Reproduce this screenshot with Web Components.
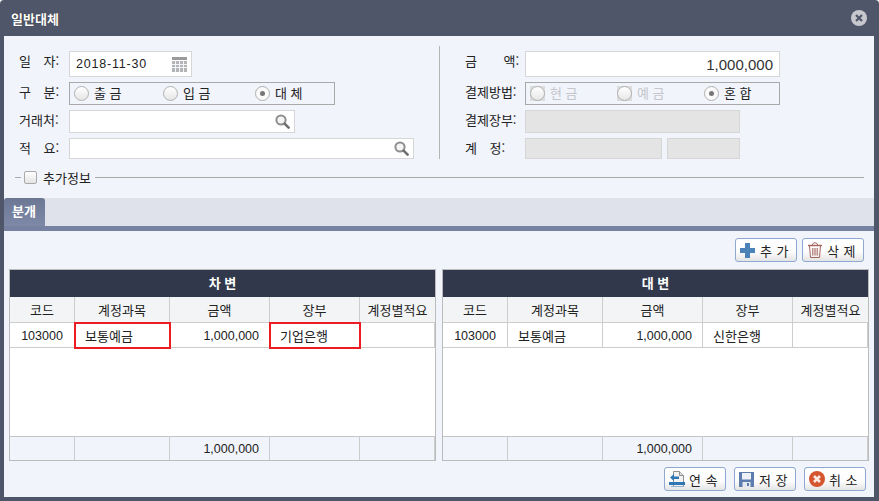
<!DOCTYPE html>
<html lang="ko">
<head>
<meta charset="UTF-8">
<title>일반대체</title>
<style>
  html, body { margin: 0; height: 100%; background: #fff; }
  body { font: 13px "Noto Sans CJK KR", "Liberation Sans", sans-serif; color: #222; overflow: hidden; }
</style>
</head>
<body>

<transfer-dialog heading="일반대체">
  <form-panel slot="form">
    <form-column slot="left" label-width="50">
      <form-field label="일 자:" gap="9"><text-box width="123" value="2018-11-30" icon="calendar"></text-box></form-field>
      <form-field label="구 분:" gap="9">
        <radio-group columns="89px 92px 1fr" width="266">
          <radio-dot>출 금</radio-dot>
          <radio-dot>입 금</radio-dot>
          <radio-dot checked>대 체</radio-dot>
        </radio-group>
      </form-field>
      <form-field label="거래처:"><text-box width="226" icon="search"></text-box></form-field>
      <form-field label="적 요:" gap="9"><text-box width="345" icon="search"></text-box></form-field>
    </form-column>
    <form-column slot="right" label-width="60">
      <form-field label="금 액:" gap="23"><text-box width="255" value="1,000,000" amount></text-box></form-field>
      <form-field label="결제방법:">
        <radio-group columns="87px 87px 1fr" width="255">
          <radio-dot disabled>현 금</radio-dot>
          <radio-dot disabled>예 금</radio-dot>
          <radio-dot checked>혼 합</radio-dot>
        </radio-group>
      </form-field>
      <form-field label="결제장부:"><text-box width="215" disabled></text-box></form-field>
      <form-field label="계 정:" gap="9">
        <text-box width="137" disabled></text-box><text-box width="73" disabled></text-box>
      </form-field>
    </form-column>
  </form-panel>

  <fold-legend slot="form">추가정보</fold-legend>
  <tab-strip slot="tabs">분개</tab-strip>

  <tool-button slot="tools" icon="plus">추 가</tool-button>
  <tool-button slot="tools" icon="trash">삭 제</tool-button>

  <ledger-table slot="tables" heading="차 변" account="보통예금" book="기업은행" flagged></ledger-table>
  <ledger-table slot="tables" heading="대 변" account="보통예금" book="신한은행"></ledger-table>

  <tool-button slot="actions" icon="next">연 속</tool-button>
  <tool-button slot="actions" icon="disk">저 장</tool-button>
  <tool-button slot="actions" icon="cancel">취 소</tool-button>
</transfer-dialog>

<script>
const ICONS = {
  calendar: `<svg width="15" height="15" viewBox="0 0 15 15"><rect width="15" height="3" fill="#9a9a9a"/><rect y="4" width="15" height="11" fill="#b4b4b4"/><path d="M0 7.500h15M0 10.500h15M3.500 3v12M7.500 3v12M11.500 3v12" stroke="#f1f4fa" stroke-width="1"/></svg>`,
  search: `<svg width="15" height="15" viewBox="0 0 15 15" fill="none"><circle cx="6" cy="6" r="4.600" stroke="#8f8f8f" stroke-width="2" fill="#f4f6f4"/><path d="M9.600 9.600l4 4" stroke="#6e6e6e" stroke-width="2.600" stroke-linecap="round"/></svg>`,
  plus: `<svg width="15" height="15" viewBox="0 0 15 15"><path d="M5 0h5v5h5v5h-5v5H5v-5H0V5h5z" fill="#4b82b8"/></svg>`,
  trash: `<svg width="14" height="16" viewBox="0 0 14 16" fill="none" stroke="#a4645c"><path d="M0 3.500h14" stroke-width="1.400"/><path d="M4.500 3c0-3 5-3 5 0"/><path d="M1.500 4l1 11.500h9l1-11.500"/><path d="M4.800 6v7.500M7 6v7.500M9.200 6v7.500" stroke-width="1.100"/></svg>`,
  next: `<svg width="16" height="17" viewBox="0 0 16 17"><path d="M4.500 .5h6l4 4v11h-10z" fill="#f2f2f2" stroke="#8f8f8f"/><path d="M10.500 .5v4h4" fill="#dcdcdc" stroke="#8f8f8f"/><path d="M1 6.500l4-3.500v2.500h5v2.500H5v2z" fill="#2f76b4"/><path d="M0 11h16v3H0z" fill="#2f76b4"/><path d="M2 15h12v1H2z" fill="#8fb4d6"/></svg>`,
  disk: `<svg width="15" height="15" viewBox="0 0 15 15"><path d="M0 0h15v15H0z" fill="#5d7daf"/><rect x="3" y="1" width="9" height="6.500" fill="#eef2f8"/><rect x="3.500" y="10" width="8" height="5" fill="#e4e8f0"/><rect x="8" y="11" width="2" height="3" fill="#5d7daf"/></svg>`,
  cancel: `<svg width="16" height="16" viewBox="0 0 16 16"><circle cx="8" cy="8" r="8" fill="#d4552f"/><path d="M5 5l6 6M11 5l-6 6" stroke="#fbe9e2" stroke-width="2.600"/></svg>`,
};

class TransferDialog extends HTMLElement {
  constructor() {
    super();
    this.attachShadow({ mode: "open" }).innerHTML = `
      <style>
        :host { display: flex; flex-direction: column; width: 879px; height: 501px; box-sizing: border-box;
                background: #50566a; border-radius: 4px 4px 0 0; padding: 0 5px 4px 4px; }
        header { height: 36px; flex: none; display: flex; align-items: center; justify-content: space-between;
                 padding: 0 7px 0 7px; color: #fff; font-weight: 700; font-size: 13px; text-shadow: 0 0 1px #222; }
        main { flex: 1; display: flex; flex-direction: column; background: #f1f4fa; }
        .top { height: 162px; flex: none; box-sizing: border-box; padding-top: 10px; }
        .tools { display: flex; justify-content: flex-end; gap: 5px; padding: 7px 10px 7px 0; }
        .tables { display: flex; gap: 6px; padding: 0 5px; }
        .actions { display: flex; justify-content: flex-end; gap: 8px; padding: 6px 8px 6px 0; }
        .close { width: 16px; height: 16px; display: block; }
      </style>
      <header>
        <span id="title"></span>
        <svg class="close" viewBox="0 0 16 16"><circle cx="8" cy="8" r="8" fill="#c6c8ce"/><path d="M5 5l6 6M11 5l-6 6" stroke="#50566a" stroke-width="2.200"/></svg>
      </header>
      <main>
        <div class="top"><slot name="form"></slot></div>
        <slot name="tabs"></slot>
        <div class="tools"><slot name="tools"></slot></div>
        <div class="tables"><slot name="tables"></slot></div>
        <div class="actions"><slot name="actions"></slot></div>
      </main>`;
    this.shadowRoot.getElementById("title").textContent = this.getAttribute("heading");
  }
}

class FormPanel extends HTMLElement {
  constructor() {
    super();
    this.attachShadow({ mode: "open" }).innerHTML = `
      <style>
        :host { display: flex; height: 113px; }
        .l { width: 435px; box-sizing: border-box; padding: 5px 0 0 15px; }
        .r { flex: 1; box-sizing: border-box; padding: 5px 0 0 25px; border-left: 1px solid #b4b4b4; }
      </style>
      <div class="l"><slot name="left"></slot></div>
      <div class="r"><slot name="right"></slot></div>`;
  }
}

class FormColumn extends HTMLElement {
  constructor() {
    super();
    this.attachShadow({ mode: "open" }).innerHTML = `
      <style>
        :host { display: grid; grid-template-rows: 26px 23px 23px 21px; row-gap: 5px;
                --label-width: ${this.getAttribute("label-width")}px; }
      </style>
      <slot></slot>`;
  }
}

class FormField extends HTMLElement {
  constructor() {
    super();
    this.attachShadow({ mode: "open" }).innerHTML = `
      <style>
        :host { display: flex; align-items: flex-start; }
        label { width: var(--label-width); flex: none; line-height: 19px; white-space: pre; color: #222; }
        .c { display: flex; gap: 5px; height: 100%; }
      </style>
      <label></label><div class="c"><slot></slot></div>`;
    const label = this.shadowRoot.querySelector("label");
    label.textContent = this.getAttribute("label");
    label.style.wordSpacing = (this.getAttribute("gap") || 0) + "px";
  }
}

class TextBox extends HTMLElement {
  constructor() {
    super();
    const icon = this.getAttribute("icon");
    this.attachShadow({ mode: "open" }).innerHTML = `
      <style>
        :host { display: flex; align-items: center; box-sizing: border-box; height: 100%;
                width: ${this.getAttribute("width")}px; padding: 0 3px 0 6px; background: #fff; border: 1px solid #d6d6d6; }
        :host([disabled]) { background: #e4e4e4; }
        span { flex: 1; font: 12.500px "Liberation Sans", sans-serif; letter-spacing: .8px; color: #222; }
        :host([amount]) span { text-align: right; font-size: 15px; letter-spacing: 0; padding-right: 3px; color: #333; }
        svg { display: block; margin-right: 1px; }
      </style>
      <span></span>${icon ? ICONS[icon] : ""}`;
    this.shadowRoot.querySelector("span").textContent = this.getAttribute("value") || "";
  }
}

class RadioGroup extends HTMLElement {
  constructor() {
    super();
    this.attachShadow({ mode: "open" }).innerHTML = `
      <style>
        :host { display: grid; align-items: center; box-sizing: border-box; height: 100%; padding-left: 4px;
                width: ${this.getAttribute("width")}px; grid-template-columns: ${this.getAttribute("columns")};
                border: 1px solid #a9a9a9; }
      </style>
      <slot></slot>`;
  }
}

class RadioDot extends HTMLElement {
  constructor() {
    super();
    this.attachShadow({ mode: "open" }).innerHTML = `
      <style>
        :host { display: flex; align-items: center; gap: 5px; line-height: 19px; }
        :host([disabled]) { color: #c4c6cc; }
        i { width: 15px; height: 15px; box-sizing: border-box; border-radius: 50%; border: 1px solid #b0b0b0;
            background: linear-gradient(#fff, #e6e6e6); display: flex; align-items: center; justify-content: center; }
        :host([disabled]) .bg { background: #dcdcdc; }
        :host([checked]) i { background: #fafafa; }
        :host([checked]) i::after { content: ""; width: 5px; height: 5px; border-radius: 50%; background: #777; }
        .bg { display: block; line-height: 0; }
        .t { margin-bottom: 2px; }
      </style>
      <span class="bg"><i></i></span><span class="t"><slot></slot></span>`;
  }
}

class FoldLegend extends HTMLElement {
  constructor() {
    super();
    this.attachShadow({ mode: "open" }).innerHTML = `
      <style>
        :host { display: flex; align-items: center; height: 14px; margin: 11px 10px 0 11px; gap: 3px; }
        .dash { width: 6px; height: 1px; background: #a9a9a9; }
        .line { flex: 1; height: 1px; background: #a9a9a9; }
        i { width: 11px; height: 11px; border: 1px solid #aaa; border-radius: 2px; background: linear-gradient(#fff, #e4e4e4); }
        span { padding: 0 1px 0 3px; }
      </style>
      <div class="dash"></div><i></i><span><slot></slot></span><div class="line"></div>`;
  }
}

class TabStrip extends HTMLElement {
  constructor() {
    super();
    this.attachShadow({ mode: "open" }).innerHTML = `
      <style>
        :host { display: block; height: 28px; background: #dfe2eb; border-bottom: 5px solid #7782a3; }
        div { width: 41px; height: 28px; box-sizing: border-box; padding-left: 8px; line-height: 26px; color: #fff; font-weight: 700;
              background: linear-gradient(#6b7793, #7e89a8); border-radius: 3px 3px 0 0; }
      </style>
      <div><slot></slot></div>`;
  }
}

class ToolButton extends HTMLElement {
  constructor() {
    super();
    this.attachShadow({ mode: "open" }).innerHTML = `
      <style>
        :host { display: flex; align-items: center; box-sizing: border-box; width: 62px; height: 24px; padding-left: 3px; gap: 4px;
                border: 1px solid #8ea8cf; border-radius: 3px; white-space: nowrap; word-spacing: 1px;
                background: linear-gradient(#fff 0, #fcfcfc 60%, #e4e4e4 100%); }
        b { display: flex; width: 17px; flex: none; justify-content: center; }
        svg { display: block; }
      </style>
      <b>${ICONS[this.getAttribute("icon")]}</b><slot></slot>`;
  }
}

class LedgerTable extends HTMLElement {
  constructor() {
    super();
    const flagged = this.hasAttribute("flagged") ? "flag" : "";
    this.attachShadow({ mode: "open" }).innerHTML = `
      <style>
        :host { display: grid; width: 427px; box-sizing: border-box; border: 1px solid #bcbcbc;
                grid-template-columns: 65px 95px 100px 90px 75px; grid-template-rows: 27px 26px 25px 89px 23px; }
        div { box-sizing: border-box; border-right: 1px solid #cdcdcd; border-bottom: 1px solid #cdcdcd; line-height: 26px;
              text-align: center; background: #fff; white-space: nowrap; }
        .title { grid-column: 1 / -1; background: #32384b; color: #fff; font-weight: 700; line-height: 26px; border: 0; }
        .head { background: #f3f4f6; line-height: 25px; }
        .head:last-of-type { border-right: 0; }
        .num { font: 12.500px/26px "Liberation Sans", sans-serif; }
        .amt { text-align: right; padding-right: 10px; }
        .txt { text-align: left; padding-left: 10px; }
        .gap { grid-column: 1 / -1; border-right: 0; border-bottom: 1px solid #c4c4c4; }
        .foot { background: #f1f4fa; border-bottom: 0; line-height: 24px; }
        .flag { outline: 2px solid #ed1c24; outline-offset: -1px; position: relative; }
      </style>
      <div class="title"></div>
      <div class="head">코드</div><div class="head">계정과목</div><div class="head">금액</div><div class="head">장부</div><div class="head" style="border-right:0">계정별적요</div>
      <div class="num">103000</div><div class="txt ${flagged}" id="account"></div><div class="num amt">1,000,000</div><div class="txt ${flagged}" id="book"></div><div></div>
      <div class="gap"></div>
      <div class="foot"></div><div class="foot"></div><div class="foot num amt">1,000,000</div><div class="foot"></div><div class="foot"></div>`;
    const root = this.shadowRoot;
    root.querySelector(".title").textContent = this.getAttribute("heading");
    root.getElementById("account").textContent = this.getAttribute("account");
    root.getElementById("book").textContent = this.getAttribute("book");
  }
}

customElements.define("transfer-dialog", TransferDialog);
customElements.define("form-panel", FormPanel);
customElements.define("form-column", FormColumn);
customElements.define("form-field", FormField);
customElements.define("text-box", TextBox);
customElements.define("radio-group", RadioGroup);
customElements.define("radio-dot", RadioDot);
customElements.define("fold-legend", FoldLegend);
customElements.define("tab-strip", TabStrip);
customElements.define("tool-button", ToolButton);
customElements.define("ledger-table", LedgerTable);
</script>
</body>
</html>
